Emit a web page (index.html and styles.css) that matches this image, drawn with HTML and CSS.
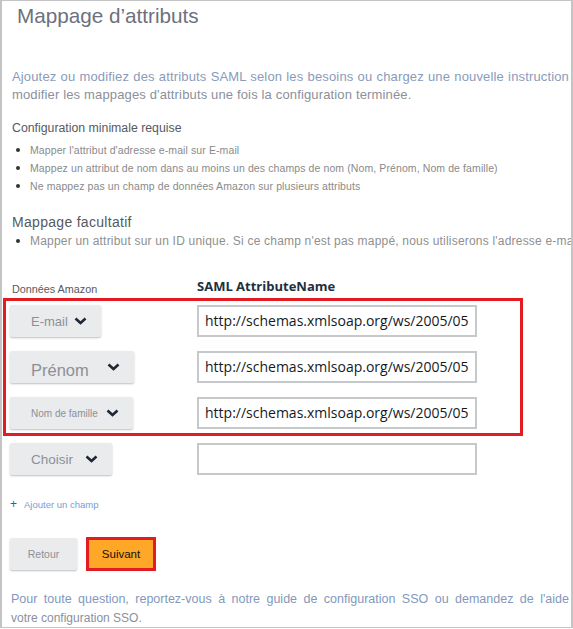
FILE: index.html
```html
<!DOCTYPE html>
<html lang="fr">
<head>
<meta charset="utf-8">
<title>Mappage d'attributs</title>
<link rel="stylesheet" href="styles.css">
</head>
<body>
<div class="frame">
  <h1 class="title">Mappage d’attributs</h1>

  <div class="intro">
    <div class="jline l1">Ajoutez ou modifiez des attributs SAML selon les besoins ou chargez une nouvelle instruction</div>
    <div class="line l2">modifier les mappages d'attributs une fois la configuration terminée.</div>
  </div>

  <h2 class="sub">Configuration minimale requise</h2>
  <ul class="bullets">
    <li>Mapper l'attribut d'adresse e-mail sur E-mail</li>
    <li>Mappez un attribut de nom dans au moins un des champs de nom (Nom, Prénom, Nom de famille)</li>
    <li>Ne mappez pas un champ de données Amazon sur plusieurs attributs</li>
  </ul>

  <h2 class="sub sub2">Mappage facultatif</h2>
  <ul class="bullets big">
    <li>Mapper un attribut sur un ID unique. Si ce champ n'est pas mappé, nous utiliserons l'adresse e-mail</li>
  </ul>

  <div class="heads">
    <span class="h-amazon">Données Amazon</span>
    <span class="h-saml">SAML AttributeName</span>
  </div>

  <div class="mapped">
    <div class="row">
      <div class="select s-email"><span class="lbl">E-mail</span><svg class="chev" viewBox="0 0 13 8"><path d="M1.5 1.5 L6.5 6 L11.5 1.5"/></svg></div>
      <div class="input">http://schemas.xmlsoap.org/ws/2005/05</div>
    </div>
    <div class="row">
      <div class="select s-prenom"><span class="lbl">Prénom</span><svg class="chev" viewBox="0 0 13 8"><path d="M1.5 1.5 L6.5 6 L11.5 1.5"/></svg></div>
      <div class="input">http://schemas.xmlsoap.org/ws/2005/05</div>
    </div>
    <div class="row">
      <div class="select s-nom"><span class="lbl">Nom de famille</span><svg class="chev" viewBox="0 0 13 8"><path d="M1.5 1.5 L6.5 6 L11.5 1.5"/></svg></div>
      <div class="input">http://schemas.xmlsoap.org/ws/2005/05</div>
    </div>
  </div>
  <div class="row row4">
    <div class="select s-choisir"><span class="lbl">Choisir</span><svg class="chev" viewBox="0 0 13 8"><path d="M1.5 1.5 L6.5 6 L11.5 1.5"/></svg></div>
    <div class="input"></div>
  </div>

  <div class="add"><span class="plus">+</span><span>Ajouter un champ</span></div>

  <div class="actions">
    <div class="btn back">Retour</div>
    <div class="btn next">Suivant</div>
  </div>

  <div class="outro">
    <div class="jline f1">Pour toute question, reportez-vous à notre guide de configuration SSO ou demandez de l'aide</div>
    <div class="line f2">votre configuration SSO.</div>
  </div>
</div>
</body>
</html>
```
FILE: styles.css
```css
html, body {
  margin: 0;
  padding: 0;
  background: #ffffff;
}
body {
  font-family: "Liberation Sans", Arial, sans-serif;
}
.frame {
  box-sizing: border-box;
  width: 573px;
  height: 628px;
  border: 1px solid #c4c4c4;
  border-left-width: 2px;
  border-right-width: 2px;
  overflow: hidden;
  padding-left: 8px;
  background: #fff;
}
.title {
  margin: 2px 0 0 7px;
  font-weight: normal;
  font-size: 20.7px;
  line-height: 26px;
  color: #6c717d;
}
.intro {
  margin-top: 39px;
  padding-left: 2px;
  font-size: 13px;
  line-height: 18px;
  letter-spacing: 0.15px;
}
.jline {
  white-space: nowrap;
  text-align: justify;
  text-align-last: justify;
}
.line {
  white-space: nowrap;
}
.l1 {
  width: 557px;
  color: #8a9bba;
}
.l2 {
  color: #8b909b;
}
.sub {
  margin: 15px 0 0 2px;
  font-weight: normal;
  font-size: 12.3px;
  line-height: 18px;
  color: #555a60;
}
.sub2 {
  margin-top: 18px;
  font-size: 14px;
  letter-spacing: 0.3px;
}
.bullets {
  list-style: none;
  margin: 4px 0 0 0;
  padding: 0;
  font-size: 10.5px;
  line-height: 18px;
  letter-spacing: 0.1px;
  color: #8a8a8a;
  white-space: nowrap;
}
.bullets li {
  display: flex;
  align-items: center;
}
.bullets li::before {
  content: "";
  width: 4px;
  height: 4px;
  border-radius: 50%;
  background: #333;
  margin: 0 10px 0 6px;
  flex: none;
}
.bullets.big {
  margin-top: 1px;
  font-size: 12px;
  letter-spacing: 0.2px;
  color: #8f8f8f;
}
.heads {
  display: grid;
  grid-template-columns: 187px auto;
  align-items: end;
  margin-top: 27px;
}
.h-amazon {
  padding-left: 2px;
  font-size: 10.8px;
  color: #555a60;
}
.h-saml {
  font-family: "Open Sans", sans-serif;
  font-weight: bold;
  font-size: 13px;
  color: #232f3e;
}
.mapped {
  width: 520px;
  box-sizing: border-box;
  margin: 3px 0 0 -7px;
  border: 3px solid #e31b23;
  padding: 4px 0 4px 4px;
  display: flex;
  flex-direction: column;
  gap: 14px;
}
.row {
  display: grid;
  grid-template-columns: 187px 280px;
  align-items: start;
}
.row4 {
  margin-top: 7px;
}
.select {
  box-sizing: border-box;
  height: 32px;
  background: #e9ebed;
  border-radius: 2px;
  box-shadow: 0 1px 2px rgba(0, 0, 0, 0.25);
  display: flex;
  align-items: center;
  padding-left: 21px;
  color: #8d9096;
}
.s-email { width: 91px; }
.s-prenom { width: 124px; }
.s-nom { width: 123px; }
.s-choisir { width: 102px; }
.s-email .lbl { font-size: 13px; width: 43px; }
.s-prenom .lbl { font-size: 16.5px; width: 76px; padding-top: 6px; }
.s-nom .lbl { font-size: 10px; width: 75px; }
.s-choisir .lbl { font-size: 13.5px; width: 54px; }
.chev {
  width: 13px;
  height: 8px;
  fill: none;
  stroke: #1e2733;
  stroke-width: 2.6;
}
.input {
  box-sizing: border-box;
  width: 280px;
  height: 32px;
  border: 2px solid #c6c9cc;
  background: #fff;
  padding-left: 6px;
  font-family: "Open Sans", sans-serif;
  font-size: 14px;
  line-height: 28px;
  color: #16191f;
  white-space: nowrap;
  overflow: hidden;
}
.add {
  display: flex;
  align-items: center;
  gap: 7px;
  margin-top: 22px;
  font-size: 9.5px;
  color: #7b9bd2;
}
.plus {
  color: #2f5db5;
  font-size: 12px;
}
.actions {
  display: flex;
  gap: 9px;
  margin-top: 26px;
  align-items: center;
}
.btn {
  box-sizing: border-box;
  height: 32px;
  display: flex;
  align-items: center;
  justify-content: center;
  font-size: 10.5px;
}
.back {
  width: 67px;
  background: #e9ebed;
  border-radius: 2px;
  box-shadow: 0 1px 2px rgba(0, 0, 0, 0.25);
  color: #8d9096;
}
.next {
  width: 70px;
  height: 34px;
  background: #ffa726;
  border: 3px solid #e31b23;
  color: #111;
  font-size: 11.5px;
}
.outro {
  margin-top: 19px;
  padding-left: 1px;
  font-size: 12.5px;
  line-height: 19px;
}
.f1 {
  width: 558px;
  color: #8398bb;
}
.f2 {
  font-size: 12px;
  color: #8b909b;
}
```
